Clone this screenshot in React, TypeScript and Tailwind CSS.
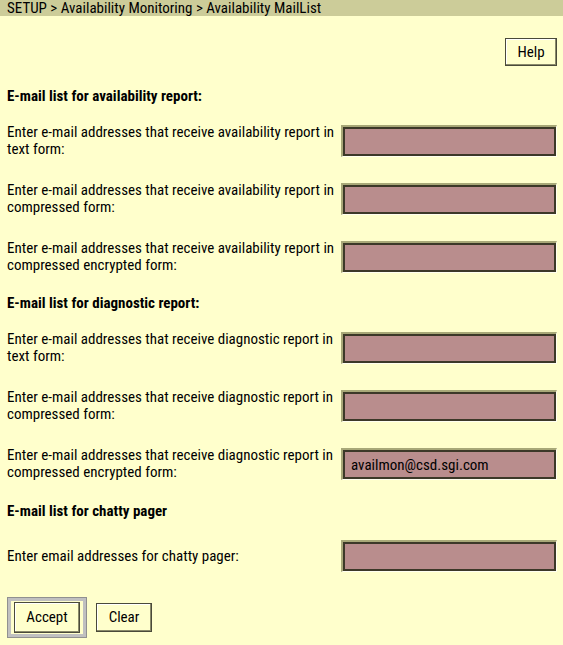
const FONT = "font-['Roboto','Liberation_Sans',sans-serif] [font-stretch:83%]";

const sections = [
  {
    title: 'E-mail list for availability report:',
    top: 'mt-[22px]',
    rows: [
      { label: 'Enter e-mail addresses that receive availability report in text form:', value: '' },
      { label: 'Enter e-mail addresses that receive availability report in compressed form:', value: '' },
      { label: 'Enter e-mail addresses that receive availability report in compressed encrypted form:', value: '' },
    ],
  },
  {
    title: 'E-mail list for diagnostic report:',
    top: 'mt-[22px]',
    rows: [
      { label: 'Enter e-mail addresses that receive diagnostic report in text form:', value: '' },
      { label: 'Enter e-mail addresses that receive diagnostic report in compressed form:', value: '' },
      { label: 'Enter e-mail addresses that receive diagnostic report in compressed encrypted form:', value: 'availmon@csd.sgi.com' },
    ],
  },
  {
    title: 'E-mail list for chatty pager',
    top: 'mt-[23px]',
    rows: [{ label: 'Enter email addresses for chatty pager:', value: '' }],
  },
];

function Field({ label, value }: { label: string; value: string }) {
  return (
    <div className="flex items-center h-[32px]">
      <div className="w-[334px] pr-1 text-[15px] leading-[17px] text-black">{label}</div>
      <div className="w-[216px] h-[32px] border-t-2 border-l-2 border-t-[#a8a878] border-l-[#a8a878] border-b border-r border-b-[#fffff0] border-r-[#fffff0]">
        <input
          defaultValue={value}
          className={`${FONT} w-full h-full bg-[#b98d8d] border-2 border-[#3c3828] px-[6px] text-[15px] text-black outline-none`}
        />
      </div>
    </div>
  );
}

function Btn({ children, w, h }: { children: React.ReactNode; w: string; h: string }) {
  return (
    <button
      className={`${FONT} ${w} ${h} bg-[#ffffcc] border border-[#4a4a3a] shadow-[inset_-1px_-1px_0_#8a8a6a,inset_1px_1px_0_#ffffff] text-[15px] text-black`}
    >
      {children}
    </button>
  );
}

export default function App() {
  return (
    <div className={`${FONT} w-[563px] h-[645px] bg-[#ffffcc] overflow-hidden`}>
      <div className="h-[16px] bg-[#cccc99] pl-[7px] text-[15px] leading-[16px] text-black whitespace-nowrap">
        SETUP &gt; Availability Monitoring &gt; Availability MailList
      </div>

      <div className="flex justify-end pr-[6px] pt-[22px]">
        <Btn w="w-[52px]" h="h-[28px]">Help</Btn>
      </div>

      <div className="pl-[7px] pr-[6px]">
        {sections.map((s, i) => (
          <div key={i} className={s.top}>
            <div className="font-bold text-[15px] leading-[17px] text-black">{s.title}</div>
            <div className="flex flex-col gap-[26px] mt-[20px]">
              {s.rows.map((r, j) => (
                <Field key={j} label={r.label} value={r.value} />
              ))}
            </div>
          </div>
        ))}

        <div className="flex items-center gap-[10px] mt-[26px] pl-[1px]">
          <div className="px-[3px] py-[1px] border-[3px] border-[#c0c0c0] outline outline-1 outline-[#909090]">
            <Btn w="w-[66px]" h="h-[31px]">Accept</Btn>
          </div>
          <Btn w="w-[56px]" h="h-[29px]">Clear</Btn>
        </div>
      </div>
    </div>
  );
}
